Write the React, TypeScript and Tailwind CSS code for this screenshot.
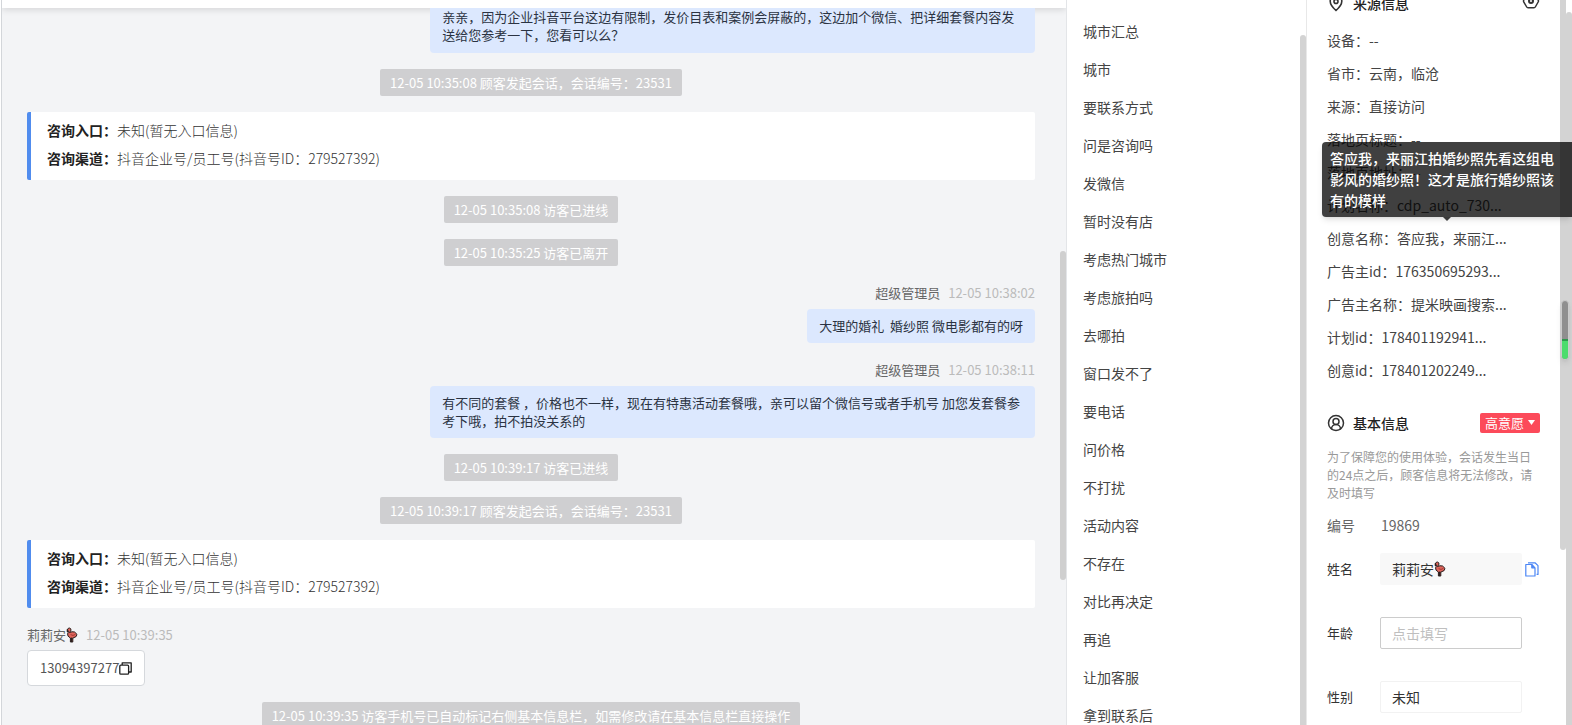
import type { ReactNode } from 'react';
import { CircleUserRound, Hexagon } from 'lucide-react';

const QUICK_REPLIES = [
  '城市汇总',
  '城市',
  '要联系方式',
  '问是咨询吗',
  '发微信',
  '暂时没有店',
  '考虑热门城市',
  '考虑旅拍吗',
  '去哪拍',
  '窗口发不了',
  '要电话',
  '问价格',
  '不打扰',
  '活动内容',
  '不存在',
  '对比再决定',
  '再追',
  '让加客服',
  '拿到联系后',
];

const SOURCE_ROWS: { label: string; value: string }[] = [
  { label: '设备', value: '--' },
  { label: '省市', value: '云南，临沧' },
  { label: '来源', value: '直接访问' },
  { label: '落地页标题', value: '--' },
  { label: '落地页地址', value: '--' },
  { label: '计划名称', value: 'cdp_auto_730...' },
  { label: '创意名称', value: '答应我，来丽江...' },
  { label: '广告主id', value: '176350695293...' },
  { label: '广告主名称', value: '提米映画搜索...' },
  { label: '计划id', value: '178401192941...' },
  { label: '创意id', value: '178401202249...' },
];

function Flamingo() {
  return (
    <svg width="12" height="16" viewBox="0 0 12 16" aria-label="flamingo" role="img">
      <path d="M1.5 4.2V2.6Q1.8 1 3.4 1Q5 1.2 5 3Q4.8 4.4 3.4 5.6Q6 4.2 8.6 5L11 7.4Q10.8 10 8 10.6L6.8 11V15H4.4V11Q1.2 9.4 1.6 7Q2 5.4 3 4.2Z" fill="#e0655c" stroke="#29201f" strokeWidth="1" strokeLinejoin="round" />
      <path d="M5.6 10.6V15" stroke="#29201f" strokeWidth="1.6" />
      <path d="M4.6 7.6Q7 9.4 9.4 7.4" fill="none" stroke="#a33b35" strokeWidth="1" />
      <path d="M1.4 2.8V4.6" stroke="#29201f" strokeWidth="1.4" strokeLinecap="round" />
    </svg>
  );
}

function CopyIcon() {
  return (
    <svg width="13" height="13" viewBox="0 0 13 13" fill="none" stroke="#222" strokeWidth="1.3" strokeLinejoin="round">
      <rect x="0.8" y="3.2" width="8.8" height="9" rx="1" />
      <path d="M3.2 3V0.8H12.2V10H9.8" />
    </svg>
  );
}

function Notice({ children }: { children: ReactNode }) {
  return (
    <div className="self-center whitespace-nowrap rounded-xs bg-[#cfcfd1] px-2.5 py-1 text-[13px] leading-[19px] text-white">
      {children}
    </div>
  );
}

function EntryCard() {
  return (
    <dl className="rounded-xs border-l-4 border-[#508cee] bg-white pt-1 pb-2 pl-4 text-sm leading-7">
      <div className="flex">
        <dt className="font-bold text-[#222]">咨询入口：</dt>
        <dd className="font-light text-[#333]">未知(暂无入口信息)</dd>
      </div>
      <div className="flex">
        <dt className="font-bold text-[#222]">咨询渠道：</dt>
        <dd className="font-light text-[#333]">抖音企业号/员工号(抖音号ID：279527392)</dd>
      </div>
    </dl>
  );
}

function AgentMessage({ time, children }: { time: string; children: ReactNode }) {
  return (
    <div className="flex flex-col items-end">
      <div className="mb-[5px] flex gap-2 text-[13px] leading-[22px]">
        <span className="text-[#666]">超级管理员</span>
        <time className="text-[#bbb]">{time}</time>
      </div>
      <div className="max-w-[60%] whitespace-pre-wrap rounded-sm bg-[#dce8fe] px-3 py-2 text-[13px] leading-[18px] text-[#2b3342]">
        {children}
      </div>
    </div>
  );
}

function ChatPanel() {
  return (
    <main className="relative flex min-w-0 flex-1 flex-col overflow-hidden border-l border-[#d3d6da] bg-[#f3f4f6]">
      <header className="h-2 shrink-0 bg-white shadow-[0_2px_6px_rgba(0,0,0,0.12)]" />
      <div className="flex flex-col gap-4 pr-[31px] pl-[25px]">
        <div className="max-w-[60%] self-end rounded-b-sm bg-[#dce8fe] px-3 pb-[9px] text-[13px] leading-[18px] text-[#2b3342]">
          亲亲，因为企业抖音平台这边有限制，发价目表和案例会屏蔽的，这边加个微信、把详细套餐内容发送给您参考一下，您看可以么？
        </div>
        <Notice>12-05 10:35:08 顾客发起会话，会话编号：23531</Notice>
        <EntryCard />
        <Notice>12-05 10:35:08 访客已进线</Notice>
        <Notice>12-05 10:35:25 访客已离开</Notice>
        <AgentMessage time="12-05 10:38:02">大理的婚礼  婚纱照 微电影都有的呀</AgentMessage>
        <AgentMessage time="12-05 10:38:11">
          有不同的套餐 ，价格也不一样，现在有特惠活动套餐哦，亲可以留个微信号或者手机号 加您发套餐参考下哦，拍不拍没关系的
        </AgentMessage>
        <Notice>12-05 10:39:17 访客已进线</Notice>
        <Notice>12-05 10:39:17 顾客发起会话，会话编号：23531</Notice>
        <EntryCard />
        <div className="flex flex-col items-start">
          <div className="mb-1 flex items-center text-[13px] leading-[22px]">
            <span className="text-[#666]">莉莉安</span>
            <Flamingo />
            <time className="ml-2 text-[#bbb]">12-05 10:39:35</time>
          </div>
          <div className="flex h-9 items-center rounded-sm border border-[#d5d8dc] bg-white px-3 text-[13px] text-[#555]">
            13094397277
            <button type="button" aria-label="复制">
              <CopyIcon />
            </button>
          </div>
        </div>
        <Notice>12-05 10:39:35 访客手机号已自动标记右侧基本信息栏，如需修改请在基本信息栏直接操作</Notice>
      </div>
      <div className="absolute top-[251px] right-0 h-[329px] w-1.5 rounded-full bg-[#cfcfcf]" />
    </main>
  );
}

function QuickReplies() {
  return (
    <nav className="relative w-60 shrink-0 overflow-hidden border-l border-[#e3e5e8] pt-3">
      <ul>
        {QUICK_REPLIES.map((text) => (
          <li key={text}>
            <button type="button" className="h-[38px] w-full pl-4 text-left text-sm text-[#444]">
              {text}
            </button>
          </li>
        ))}
      </ul>
      <div className="absolute top-[35px] right-0 bottom-0 w-1.5 rounded-t-full bg-[#d3d3d3]" />
    </nav>
  );
}

function BasicInfo() {
  return (
    <section className="mt-[25px]">
      <div className="flex h-[21px] items-center">
        <CircleUserRound size={18} strokeWidth={2} className="text-[#333]" />
        <h2 className="ml-2 text-sm font-medium text-[#222]">基本信息</h2>
        <button type="button" className="ml-auto flex h-5 w-15 items-center justify-center gap-1 rounded-xs bg-[#fc4a5a] text-[13px] text-white">
          高意愿
          <svg width="7" height="5" viewBox="0 0 7 5" fill="currentColor">
            <path d="M0 0H7L3.5 5Z" />
          </svg>
        </button>
      </div>
      <p className="mt-[15px] text-xs leading-[18px] text-[#999]">
        为了保障您的使用体验，会话发生当日的24点之后，顾客信息将无法修改，请及时填写
      </p>
      <div className="mt-3 flex h-[22px] items-center text-sm text-[#666]">
        <span className="w-[54px]">编号</span>
        <span>19869</span>
      </div>
      <div className="mt-[17px] flex items-center">
        <label htmlFor="name" className="w-[53px] text-[13px] text-[#333]">姓名</label>
        <div className="relative">
          <input id="name" defaultValue="莉莉安" className="h-8 w-[142px] rounded-xs bg-[#f8f8f8] px-3 text-sm text-[#333]" />
          <span className="absolute top-2 left-[54px]">
            <Flamingo />
          </span>
        </div>
        <button type="button" aria-label="复制姓名" className="ml-[3px]">
          <svg width="14" height="15" viewBox="0 0 14 15" fill="none" stroke="#4b86f5" strokeWidth="1.2" strokeLinejoin="round">
            <path d="M0.8 2.5H6.8L10 5.8V14H0.8Z" />
            <path d="M6.8 2.5V5.8H10" fill="#4b86f5" />
            <path d="M3 0.8H10L13 3.6V12.4H11.6" />
          </svg>
        </button>
      </div>
      <div className="mt-8 flex items-center">
        <label htmlFor="age" className="w-[53px] text-[13px] text-[#333]">年龄</label>
        <input id="age" placeholder="点击填写" className="h-8 w-[142px] rounded-xs border border-[#ccc] px-[11px] text-sm placeholder:text-[#bfbfbf]" />
      </div>
      <div className="mt-8 flex items-center">
        <label htmlFor="gender" className="w-[53px] text-[13px] text-[#333]">性别</label>
        <select id="gender" className="h-8 w-[142px] appearance-none rounded-xs border border-[#f2f2f2] bg-white px-[11px] text-sm text-[#333]">
          <option>未知</option>
        </select>
      </div>
    </section>
  );
}

function VisitorPanel() {
  return (
    <aside className="relative w-[266px] shrink-0 overflow-hidden border-l border-[#e8e8e8] pr-8 pl-5">
      <div className="flex h-6 items-start">
        <div className="-mt-2 flex h-[22px] flex-1 items-center">
          <svg width="18" height="18" viewBox="0 0 18 18" fill="none" stroke="#333" strokeWidth="1.6">
            <path d="M9 16.5Q3.2 11.2 3.2 7.2A5.8 5.8 0 0 1 14.8 7.2Q14.8 11.2 9 16.5Z" />
            <circle cx="9" cy="7.4" r="2" />
          </svg>
          <h2 className="ml-2 text-sm font-medium text-[#222]">来源信息</h2>
          <button type="button" aria-label="设置" className="relative ml-auto -mt-1 text-[#333]">
            <Hexagon size={18} strokeWidth={2} className="rotate-90" />
            <span className="absolute inset-[6px] rounded-full border-2 border-[#333]" />
          </button>
        </div>
      </div>
      <ul className="text-sm leading-[33px] whitespace-nowrap text-[#444]">
        {SOURCE_ROWS.map((row) => (
          <li key={row.label}>
            {row.label}：{row.value}
          </li>
        ))}
      </ul>
      <BasicInfo />

      {/* nested scrollbars: the inner panel's and the page's */}
      <div className="absolute top-0 right-1.5 h-[550px] w-1.5 rounded-b-full bg-[#d3d3d3]" />
      <div className="absolute top-3 right-0 bottom-0 w-1.5 rounded-t-full bg-[#d3d3d3]" />
      <div className="absolute top-[300px] right-[3px] flex h-[60px] w-2 flex-col overflow-hidden rounded-full border border-[#ccc] bg-[#8f8f8f] shadow-md">
        <div className="mt-auto h-5 border-t-2 border-[#2d9a4c] bg-[#4cdc6c]" />
      </div>

      <div role="tooltip" className="absolute top-[142px] right-0 w-[250px] rounded-l-sm bg-black/75 px-2 py-1.5 text-sm leading-[21px] font-medium text-white shadow-md">
        答应我，来丽江拍婚纱照先看这组电影风的婚纱照！这才是旅行婚纱照该有的模样
        <div className="absolute top-full left-1/2 size-0 -translate-x-1/2 border-x-4 border-t-4 border-x-transparent border-t-black/75" />
      </div>
    </aside>
  );
}

export default function App() {
  return (
    <div lang="zh-CN" className="flex h-screen overflow-hidden bg-white pl-px font-['Noto_Sans_CJK_SC',sans-serif]">
      <ChatPanel />
      <QuickReplies />
      <VisitorPanel />
    </div>
  );
}
